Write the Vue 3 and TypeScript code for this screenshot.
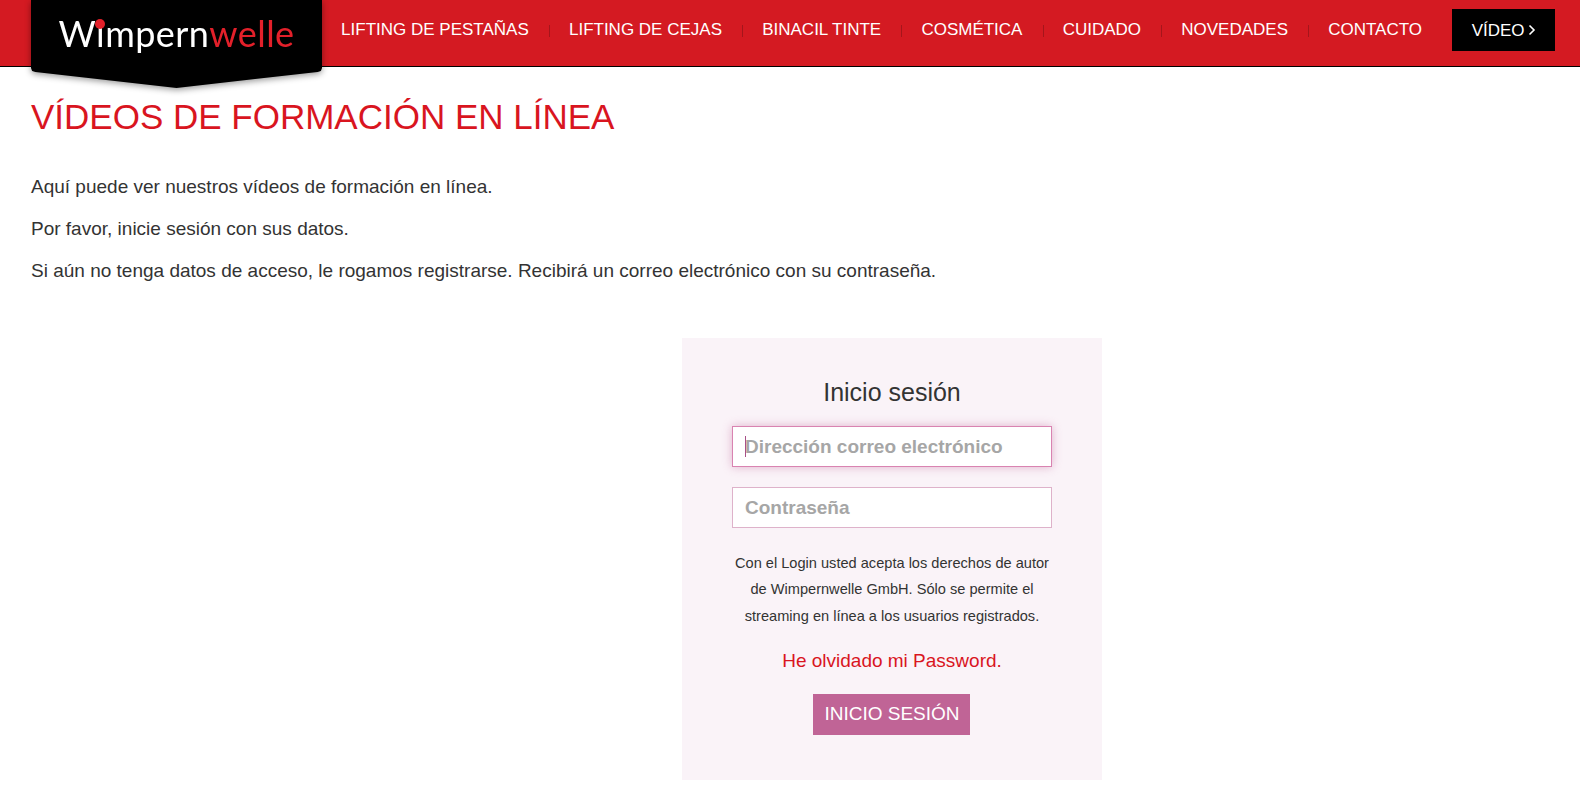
<template>
  <div class="page">
    <header class="topbar">
      <a class="logo" href="#">
        <span class="logo-shape">
          <span class="wordmark">W<span class="dotted">i<span class="dot"></span></span>mpern<span class="wordmark-red">welle</span></span>
        </span>
      </a>
      <nav class="main-nav">
        <a v-for="item in navItems" :key="item" class="nav-link" href="#">{{ item }}</a>
      </nav>
      <a class="video-btn" href="#">
        <span class="video-label">VÍDEO</span>
        <svg width="8" height="12" viewBox="0 0 8 12" fill="none" stroke="currentColor" stroke-width="1.6"><polyline points="1.5 1.5 6 6 1.5 10.5"/></svg>
      </a>
    </header>

    <main class="content">
      <h1 class="page-title">VÍDEOS DE FORMACIÓN EN LÍNEA</h1>
      <p>Aquí puede ver nuestros vídeos de formación en línea.</p>
      <p>Por favor, inicie sesión con sus datos.</p>
      <p>Si aún no tenga datos de acceso, le rogamos registrarse. Recibirá un correo electrónico con su contraseña.</p>

      <form class="login-card" @submit.prevent>
        <h2 class="login-title">Inicio sesión</h2>
        <div class="field focused">
          <input type="text" placeholder="Dirección correo electrónico" />
          <span class="caret"></span>
        </div>
        <div class="field">
          <input type="password" placeholder="Contraseña" />
        </div>
        <p class="legal">
          Con el Login usted acepta los derechos de autor<br />
          de Wimpernwelle GmbH. Sólo se permite el<br />
          streaming en línea a los usuarios registrados.
        </p>
        <a class="forgot" href="#">He olvidado mi Password.</a>
        <button class="submit" type="submit">INICIO SESIÓN</button>
      </form>
    </main>
  </div>
</template>

<script setup lang="ts">
const navItems: string[] = [
  'LIFTING DE PESTAÑAS',
  'LIFTING DE CEJAS',
  'BINACIL TINTE',
  'COSMÉTICA',
  'CUIDADO',
  'NOVEDADES',
  'CONTACTO',
]
</script>

<style>
body {
  margin: 0;
  background: #fff;
}
</style>

<style scoped>
.page {
  font-family: 'Liberation Sans', Arial, sans-serif;
  color: #333;
  height: 800px;
  overflow: hidden;
}
.topbar {
  display: flex;
  align-items: flex-start;
  height: 66px;
  padding-left: 31px;
  background: #d41a22;
  border-bottom: 1px solid #000;
}
.logo {
  display: block;
  width: 291px;
  height: 88px;
  flex: none;
  position: relative;
  z-index: 2;
  text-decoration: none;
  filter: drop-shadow(0 2px 3px rgba(0, 0, 0, 0.4));
}
.logo-shape {
  display: flex;
  justify-content: center;
  width: 100%;
  height: 100%;
  background: #000;
  clip-path: polygon(0 0, 100% 0, 100% 68px, 99.6% 71px, 98.5% 72px, 50% 88px, 1.5% 72px, 0.4% 71px, 0 68px);
}
.wordmark {
  font-family: Lato, 'Open Sans', sans-serif;
  font-weight: 400;
  font-size: 36px;
  line-height: 1;
  color: #fff;
  margin-top: 15px;
  letter-spacing: 0.45px;
}
.wordmark-red {
  color: #e3202a;
}
.dotted {
  position: relative;
}
.dot {
  position: absolute;
  left: -1px;
  top: 8px;
  width: 10px;
  height: 10px;
  border-radius: 50%;
  background: #e3202a;
  box-shadow: 0 -6px 0 1px #000;
}
.main-nav {
  display: flex;
  flex: none;
  margin-left: -1px;
  padding-top: 20px;
}
.nav-link {
  position: relative;
  padding: 0 20.1px;
  color: #fff;
  font-size: 17px;
  line-height: 20px;
  text-decoration: none;
}
.nav-link + .nav-link::before {
  content: '';
  position: absolute;
  left: 0;
  top: 5px;
  width: 1px;
  height: 12px;
  background: #a5151b;
}
.video-btn {
  display: flex;
  align-items: center;
  gap: 3px;
  margin: 9px 0 0 9.6px;
  box-sizing: border-box;
  width: 103px;
  height: 42px;
  padding-left: 20px;
  background: #000;
  color: #fff;
  font-size: 17px;
  text-decoration: none;
}
.video-label {
  padding-top: 2px;
}
.content {
  padding: 0 31px;
}
.page-title {
  margin: 30px 0 39px;
  color: #d9151f;
  font-size: 35px;
  font-weight: 400;
  line-height: 40px;
}
.content > p {
  margin: 0 0 21px;
  font-size: 19px;
  line-height: 21px;
}
.login-card {
  box-sizing: border-box;
  display: flex;
  flex-direction: column;
  align-items: center;
  width: 420px;
  height: 442px;
  margin: 57px 0 0 651px;
  padding-top: 40px;
  background: #faf3f8;
}
.login-title {
  margin: 0 0 20px;
  font-size: 25px;
  font-weight: 400;
  line-height: 28px;
}
.field {
  position: relative;
  width: 320px;
  height: 41px;
  margin-bottom: 20px;
}
.field input {
  box-sizing: border-box;
  display: block;
  width: 100%;
  height: 100%;
  padding: 0 12px;
  border: 1px solid #deb2ca;
  border-radius: 0;
  outline: none;
  background: #fff;
  font-family: inherit;
  font-size: 19px;
  font-weight: 700;
}
.field input::placeholder {
  color: #a6a6a6;
  opacity: 1;
}
.field.focused input {
  border-color: #d983b1;
  box-shadow: 0 0 9px rgba(193, 99, 150, 0.45);
}
.caret {
  position: absolute;
  left: 13px;
  top: 10px;
  width: 1px;
  height: 21px;
  background: #a85088;
}
.legal {
  margin: 2px 0 0;
  font-size: 14.6px;
  line-height: 26.4px;
  text-align: center;
}
.forgot {
  margin-top: 20.3px;
  color: #d9151f;
  font-size: 19px;
  line-height: 21px;
  text-decoration: none;
}
.submit {
  width: 157px;
  height: 41px;
  margin: 23px 2px 0 0;
  padding: 0 0 0 2px;
  border: none;
  background: #c06496;
  color: #fff;
  font-family: inherit;
  font-size: 19px;
}
</style>
